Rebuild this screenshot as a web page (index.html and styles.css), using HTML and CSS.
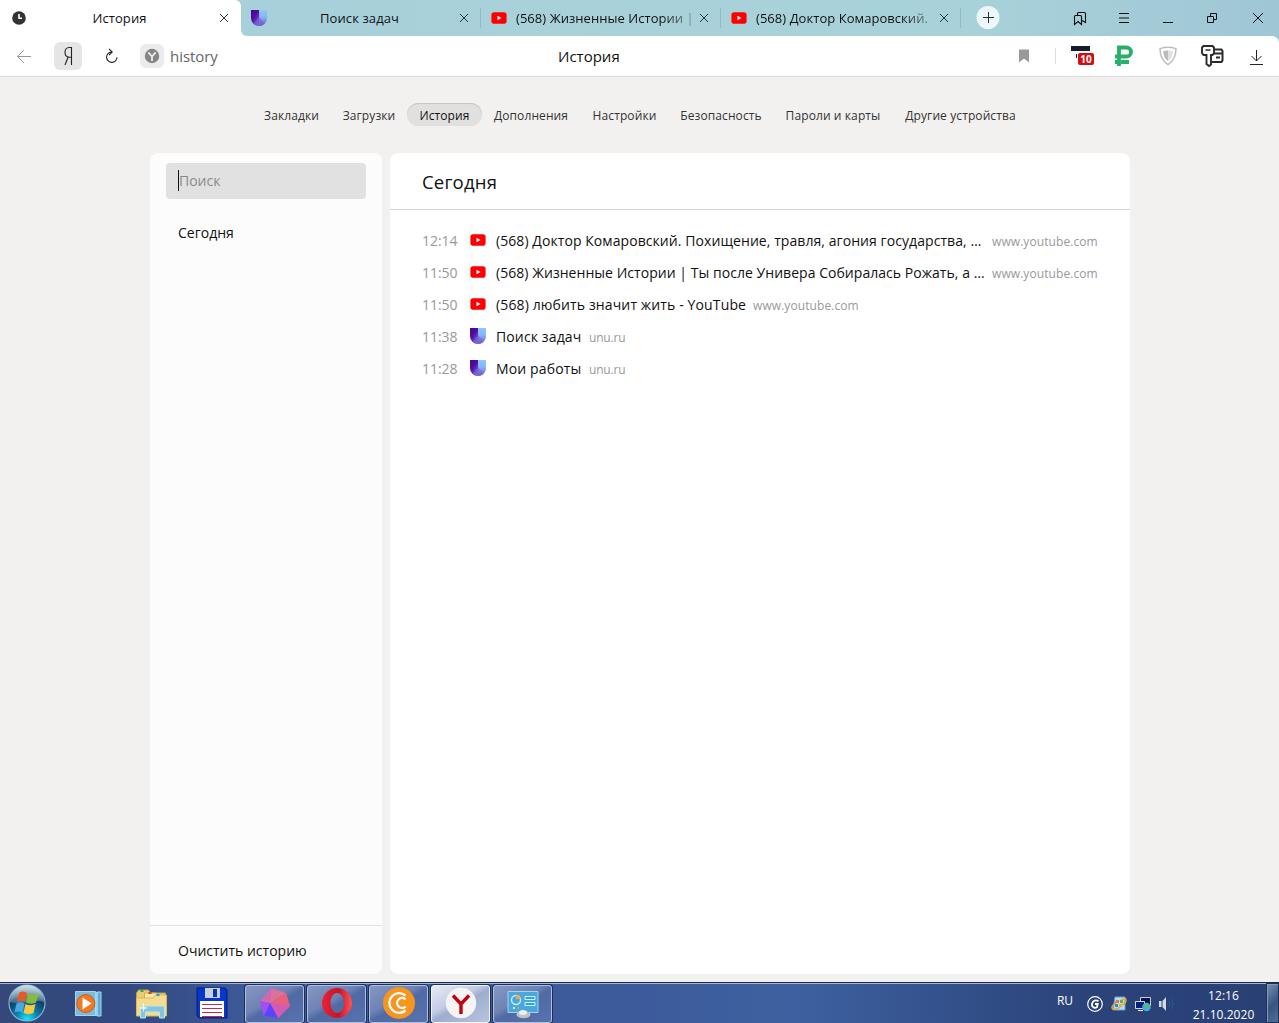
FILE: index.html
```html
<!DOCTYPE html>
<html lang="ru">
<head>
<meta charset="utf-8">
<title>История</title>
<link rel="stylesheet" href="styles.css">
</head>
<body>
<svg class="defs" width="0" height="0">
  <defs>
    <linearGradient id="unuLeft" x1="0" y1="0" x2="0.7" y2="1"><stop offset="0" stop-color="#4a0099"/><stop offset="0.5" stop-color="#52109f"/><stop offset="1" stop-color="#7d62d6"/></linearGradient>
    <linearGradient id="unuRight" x1="0" y1="0" x2="0" y2="1"><stop offset="0" stop-color="#91c7ff"/><stop offset="0.45" stop-color="#85b5f8"/><stop offset="1" stop-color="#7054cc"/></linearGradient>
  </defs>
  <symbol id="youtube" viewBox="0 0 16 16"><rect x="0.4" y="2.3" width="15.2" height="11.4" rx="2.8" fill="#f00"/><path d="M6.5 5.7v4.6l4-2.3z" fill="#fff"/></symbol>
  <symbol id="unu" viewBox="0 0 16 16"><path d="M0 0h8v16a8 8 0 0 1-8-8z" fill="url(#unuLeft)"/><path d="M8 0h8v8a8 8 0 0 1-8 8z" fill="url(#unuRight)"/><path d="M8 7 2.4 13.7A8 8 0 0 0 13.7 13.7z" fill="#7861d5" opacity=".65"/></symbol>
  <symbol id="close" viewBox="0 0 10 10"><path d="M1 1l8 8M9 1 1 9" stroke="#263238" fill="none"/></symbol>
</svg>

<header class="browser">
  <div class="tabs">
    <div class="tab tab-active">
      <svg class="tab-icon" viewBox="0 0 16 16"><circle cx="8" cy="8" r="6.8" fill="#333"/><path d="M8 4v4.3h3" stroke="#fff" stroke-width="1.6" fill="none"/></svg>
      <span class="tab-title centered">История</span>
      <svg class="close"><use href="#close"/></svg>
    </div>
    <div class="tab-strip">
      <div class="tab">
        <svg class="tab-icon"><use href="#unu"/></svg>
        <span class="tab-title centered">Поиск задач</span>
        <svg class="close"><use href="#close"/></svg>
      </div>
      <div class="tab">
        <svg class="tab-icon"><use href="#youtube"/></svg>
        <span class="tab-title faded">(568) Жизненные Истории |</span>
        <svg class="close"><use href="#close"/></svg>
      </div>
      <div class="tab">
        <svg class="tab-icon"><use href="#youtube"/></svg>
        <span class="tab-title faded">(568) Доктор Комаровский.</span>
        <svg class="close"><use href="#close"/></svg>
      </div>
      <svg class="new-tab" viewBox="0 0 24 24"><circle cx="12" cy="11.500" r="11.500" fill="#edf6f8"/><path d="M12.500 6v11M7 11.500h11" stroke="#25323b" stroke-width="1"/></svg>
      <div class="window-buttons">
        <svg viewBox="0 0 16 16"><path d="M2.500 6.500q0-1 1-1h5q1 0 1 1v8L6 11.500l-3.500 3zM5.500 5.500v-2q0-1 1-1h6q1 0 1 1v9l-3.500-2" stroke="#111" stroke-width="1.100" fill="none"/></svg>
        <svg viewBox="0 0 16 16"><path d="M3 3.500h10M3 8h10M3 12.500h10" stroke="#111" stroke-width="1.100"/></svg>
        <svg viewBox="0 0 16 16"><path d="M3 12.500h10" stroke="#111"/></svg>
        <svg viewBox="0 0 16 16"><path d="M3.500 6.500h6v6h-6zM6.500 6.500v-3h6v6h-3" stroke="#111" fill="none"/></svg>
        <svg viewBox="0 0 16 16"><path d="M3 3l10 10M13 3 3 13" stroke="#111"/></svg>
      </div>
    </div>
  </div>
  <div class="toolbar">
    <svg class="back" viewBox="0 0 16 16"><path d="M15 8.500H1.500M8 2 1.500 8.500 8 15" stroke="#999" fill="none"/></svg>
    <span class="yandex"><svg viewBox="0 0 12 20"><path d="M9.500 1v18M9.500 1.500H7.200C4.500 1.500 3 3.400 3 6.300s1.500 4.900 4.200 4.900h2.300M6 11.200 3 19" stroke="#222" stroke-width="1.100" fill="none"/></svg></span>
    <svg class="reload" viewBox="0 0 16 16"><path d="M8.500 4A5.200 5.200 0 1 0 14 9.200M6 .8 9.200 4 6 7.200" stroke="#222" stroke-width="1.100" fill="none"/></svg>
    <span class="site-badge"><svg viewBox="0 0 16 16"><circle cx="8" cy="8" r="7.200" fill="#858585"/><path d="M4.300 4.300 8 8.500l3.700-4.200M8 8v5" stroke="#eee" stroke-width="1.800" fill="none"/></svg></span>
    <span class="address">history</span>
    <span class="page-title">История</span>
    <svg class="bookmark" viewBox="0 0 12 14"><path d="M1 0.500h10v13L6 9.500l-5 4z" fill="#999"/></svg>
    <i class="divider"></i>
    <span class="counter"><svg viewBox="0 0 24 20"><path d="M1 0h19v5H1z" fill="#171b2a"/><path d="M6 8h1v4H6z" fill="#171b2a"/></svg><b>10</b></span>
    <svg class="ruble" viewBox="0 0 20 22"><path d="M5 21V2.500h7.500a4.400 4.400 0 0 1 0 9H1M1 17h4M7 17h8" stroke="#25b16c" stroke-width="3.800" fill="none"/></svg>
    <svg class="shield" viewBox="0 0 20 20"><path d="M10 1.300c3 0 5.500.5 8 1.300 0 7-2 12.400-8 16-6-3.600-8-9-8-16 2.500-.8 5-1.300 8-1.300z" stroke="#bdbdbd" stroke-width="1.500" fill="#fff"/><path d="M10 4.500c-1.700 0-3.300.3-4.800.7.3 4.500 1.500 7.500 4.800 10z" fill="#bbb"/><path d="M10 4.500c1.700 0 3.300.3 4.800.7-.3 4.500-1.500 7.500-4.800 10z" fill="#e2e2e2"/></svg>
    <svg class="keys" viewBox="0 0 24 24"><path d="M13 5.500h8.500L22.500 7v9.500L21.500 18H12M13 9.500h9M16 13.500h4" stroke="#2b2b2b" stroke-width="2" fill="none"/><path d="M3.500 2h9L14 3.500V9l-1.500 2H11v9.500l-2 1.500-2.500-2v-9H3.500L2 9V3.500z" stroke="#2b2b2b" stroke-width="1.900" fill="#fff"/><path d="M5.500 6h5" stroke="#2b2b2b" stroke-width="1.500"/></svg>
    <svg class="download" viewBox="0 0 14 16"><path d="M7.500 1v11M2.500 7l5 5 5-5M1 15.500h13" stroke="#222" stroke-width="1" fill="none"/></svg>
  </div>
</header>

<main>
  <nav>
    <a class="n1">Закладки</a><a class="n2">Загрузки</a><a class="n3 current">История</a><a class="n4">Дополнения</a><a class="n5">Настройки</a><a class="n6">Безопасность</a><a class="n7">Пароли и карты</a><a class="n8">Другие устройства</a>
  </nav>
  <div class="panels">
    <aside>
      <div class="search"><span>Поиск</span></div>
      <a class="day">Сегодня</a>
      <a class="clear">Очистить историю</a>
    </aside>
    <section>
      <h1>Сегодня</h1>
      <ul>
        <li><time>12:14</time><svg><use href="#youtube"/></svg><span class="title t1">(568) Доктор Комаровский. Похищение, травля, агония государства, …</span><span class="host">www.youtube.com</span></li>
        <li><time>11:50</time><svg><use href="#youtube"/></svg><span class="title t2">(568) Жизненные Истории | Ты после Универа Собиралась Рожать, а …</span><span class="host">www.youtube.com</span></li>
        <li><time>11:50</time><svg><use href="#youtube"/></svg><span class="title t3">(568) любить значит жить - YouTube</span><span class="host">www.youtube.com</span></li>
        <li><time>11:38</time><svg><use href="#unu"/></svg><span class="title t4">Поиск задач</span><span class="host short">unu.ru</span></li>
        <li><time>11:28</time><svg><use href="#unu"/></svg><span class="title t5">Мои работы</span><span class="host short">unu.ru</span></li>
      </ul>
    </section>
  </div>
</main>

<footer>
  <svg class="start" viewBox="0 0 38 38">
    <defs><radialGradient id="orb" cx=".5" cy=".95" r=".9"><stop offset="0" stop-color="#20e5fa"/><stop offset=".35" stop-color="#087dac"/><stop offset=".7" stop-color="#123d66"/><stop offset="1" stop-color="#7ca3b8"/></radialGradient><linearGradient id="gloss" x2="0" y2="1"><stop stop-color="#dbe8ec" stop-opacity=".85"/><stop offset="1" stop-color="#a4c2cf" stop-opacity=".3"/></linearGradient></defs>
    <circle cx="19" cy="19" r="18" fill="url(#orb)" stroke="#80b6ce" stroke-width="1.200"/><path d="M2 18a17 17 0 0 1 34 0c-12-4-22 4-34 0z" fill="url(#gloss)"/>
    <path d="M11 9c3-2 5-2 8 0l-2 9c-3-1.500-5-1.500-8 0z" fill="#e65a26"/><path d="M20 9.500c3 1.600 7 1.600 11 0l-3 9c-3 1.500-7 1.500-10 0z" fill="#83bd3b"/><path d="M8.500 19.500c3-1.600 5-1.600 8 0l-2 9c-3-1.500-5-1.500-8 0z" fill="#4ba8e4"/><path d="M17.500 20c3 1.600 6 1.600 10 0l-2 9c-3 1.500-7 1.500-10 0z" fill="#fbc83b"/>
  </svg>
  <svg class="wmp" viewBox="0 0 28 26"><path d="M22 1h4v24h-4z" fill="#5ba9d7" stroke="#a4daf3"/><path d="M20 1h3v24h-3z" fill="#96d2ef"/><path d="M.5.500h20v24H.500z" fill="#7dbbdd" stroke="#9ed9f2"/><circle cx="10.800" cy="12.500" r="9" fill="#f27822" stroke="#d55b15"/><path d="M7.500 6.500v12l9-6z" fill="#fff"/></svg>
  <svg class="explorer" viewBox="0 0 32 30"><path d="M1 4 3 1h10l2 3h15v22H1z" fill="#e8cd76" stroke="#bd9d44"/><path d="M9 4h12l1 3h8v18H9z" fill="#f7e8a1" stroke="#cbad58"/><path d="M1 9h17l2-3h11v21H1z" fill="#f4dc8c" stroke="#d6b962"/><path d="M5 1h3v2H5z" fill="#25b535"/><path d="M13 3h3v2h-3z" fill="#d54127"/><path d="M21 5h3v2h-3z" fill="#2698da"/><path d="M5 29V19q0-2 2-2h20q2 0 2 2v10h-5v-6H10v6z" fill="#83c4df" stroke="#bce5ef"/><path d="m8 13 .8 5 4 1-4 1-.8 4-.8-4-4-1 4-1z" fill="#fff" opacity=".8"/></svg>
  <svg class="floppy" viewBox="0 0 32 32"><path d="M1 1h28l2 2v28H3l-2-2z" fill="#0636d0" stroke="#071c75"/><path d="M9 1h15v10H9z" fill="#c9cfda"/><path d="M17 2h4v8h-4z" fill="#0534b6"/><path d="M4 14h24v16H4z" fill="#fff"/><path d="M6 17.500h20M6 21.500h20M6 25.500h20M6 29.500h20" stroke="#c32c47"/></svg>
  <div class="apps">
    <span><svg viewBox="0 0 32 32"><path d="M12 1 27 6l4 13-12 12-14-2-4-15z" fill="#b85be0"/><path d="m12 1 15 5-16 10z" fill="#dc7199"/><path d="m12 1-1 15-10-2z" fill="#c86bb0"/><path d="M27 6 31 19 11 16z" fill="#e76278"/><path d="M31 19 19 31l-8-15z" fill="#d45bb1"/><path d="M1 14l10 2L5 29z" fill="#a64cf4"/><path d="M5 29l6-13 8 15z" fill="#5745ff"/></svg></span>
    <span><svg viewBox="0 0 32 32"><defs><linearGradient id="opera"><stop stop-color="#f02035"/><stop offset=".55" stop-color="#c51427"/><stop offset="1" stop-color="#ff5357"/></linearGradient></defs><path fill-rule="evenodd" d="M16 1a15 15 0 1 1 0 30 15 15 0 0 1 0-30zm0 5c-4 0-6.500 4.500-6.500 10s2.500 10 6.500 10 7-4.500 7-10-3-10-7-10z" fill="url(#opera)"/></svg></span>
    <span><svg viewBox="0 0 32 32"><circle cx="16" cy="16" r="16" fill="#f7951e"/><path d="M22.500 8.500A9.800 9.800 0 1 0 22.500 23.500M22.500 12.300A5 5 0 1 0 22.500 19.700" stroke="#fff" stroke-width="2.300" fill="none"/></svg></span>
    <span class="selected"><svg viewBox="0 0 32 32"><circle cx="16" cy="16" r="15.200" fill="#f4f4f5"/><path d="M8 8.500 16 17l8-8.500M16 16v11" stroke="#c4000d" stroke-width="3.400" fill="none"/></svg></span>
    <span><svg viewBox="0 0 32 32"><path d="M1 4.500h30v21H1z" fill="#4ba6dc" stroke="#a2d5ec"/><circle cx="9" cy="13" r="4.500" fill="none" stroke="#c1ecff" stroke-width="1.500"/><path d="M9 7v5.500l5.500-1Z" fill="#f5a832"/><path d="M18 9.500h10v3H18zM18 15.500h10v3H18z" fill="#26a5e9" stroke="#d3f3ff"/><circle cx="7" cy="21" r="1" fill="#fff"/><circle cx="11" cy="21" r="1" fill="#f8a52c"/><ellipse cx="16.500" cy="27.500" rx="7" ry="3.800" fill="#bfc3c6"/><ellipse cx="16" cy="25.500" rx="4" ry="2.500" fill="#eee"/></svg></span>
  </div>
  <div class="tray">
    <span class="lang">RU</span>
    <svg viewBox="0 0 16 16"><circle cx="8" cy="8" r="7.300" fill="#254277" stroke="#fff" stroke-width="1.200"/><path d="M11.500 5.300C9 3.500 5.500 4.500 5 8c-.5 3.500 3 4.500 5 3.300L10.700 8H8" stroke="#fff" stroke-width="1.800" fill="none"/></svg>
    <svg viewBox="0 0 16 16"><path d="M4 1h10v13H2z" fill="#b4dff3" stroke="#64a1c9"/><path d="M5 4h3v3H4z" fill="#ed7831"/><path d="M9 4h3v3H9z" fill="#62ac46"/><path d="M4 8h3v3H4z" fill="#268ed0"/><path d="M8 8h3v3H8z" fill="#e8b739"/><path d="M5 7Q-1 11 2 13q4 1 8-3M10 4q5-3 5 0t-4 5" fill="none" stroke="#eda431" stroke-width="1.500"/></svg>
    <svg viewBox="0 0 16 16"><path d="M5.500 1.500h10v8h-10z" fill="#07144e" stroke="#c3ccd2"/><path d="M.5 5.500h9v7h-9z" fill="#061f7b" stroke="#d0dade"/><path d="M3 14.500h5" stroke="#eee"/><circle cx="11.500" cy="11" r="4.300" fill="#49a5e8"/><path d="m9 9 3-1 3 2-3 3-2-1z" fill="#54bd5c"/></svg>
    <svg viewBox="0 0 16 16"><path d="M0 5h2.500v6H0zM3.500 5 7 1v14l-3.500-4z" fill="#d3dadf"/><path d="M10 5q2 3 0 6M12 3q4 5 0 10" stroke="#1a668d" fill="none"/></svg>
    <div class="clock"><span>12:16</span><span>21.10.2020</span></div>
    <i class="show-desktop"></i>
  </div>
</footer>
</body>
</html>
```
FILE: styles.css
```css
* { box-sizing: border-box; }
body { margin: 0; height: 1023px; display: flex; flex-direction: column; overflow: hidden; background: #f2f1ef; color: #111; font-family: "Open Sans", "Noto Sans", sans-serif; }
svg { display: block; flex: none; }
.defs { position: absolute; }

.browser { height: 77px; background: linear-gradient(90deg, #a8d0da, #a8d2da 70%, #9fc6d5); border-bottom: 1px solid #dad9d7; }
.tabs { height: 36px; display: flex; background: linear-gradient(90deg, #fff 248px, #9fc6d5 248px); }
.tab-strip { flex: 1; display: flex; align-items: center; background: linear-gradient(90deg, #a8d0da, #a8d2da 70%, #9fc6d5); border-bottom-left-radius: 6px; }
.tab { width: 240px; height: 36px; display: flex; align-items: center; padding: 0 12px 0 11px; position: relative; font-size: 13px; letter-spacing: .1px; }
.tab-active { width: 241px; background: linear-gradient(#a8d0da, #a8d0da) right top / 6px 6px no-repeat; }
.tab-active::before { content: ""; position: absolute; inset: 0; background: #fff; border-top-right-radius: 6px; }
.tab-active > * { position: relative; }
.tab-strip .tab { padding-left: 10px; }
.tab-strip .tab::after { content: ""; width: 1px; height: 20px; background: #94b9c4; position: absolute; right: 0; top: 8px; }
.tab-icon { width: 16px; height: 16px; }
.tab-title { flex: 1; margin: 0 8px; white-space: nowrap; }
.tab-title.centered { text-align: center; margin: 0 12px 0 5px; }
.tab-title.faded { min-width: 0; margin: 0 6px 0 9px; letter-spacing: .05px; -webkit-mask-image: linear-gradient(90deg, #000 82%, rgba(0,0,0,.3)); mask-image: linear-gradient(90deg, #000 82%, rgba(0,0,0,.3)); }
.close { width: 10px; height: 10px; }
.new-tab { width: 24px; height: 24px; margin-left: 15px; }
.window-buttons { margin-left: auto; margin-right: 13px; display: flex; gap: 28px; }
.window-buttons svg { width: 16px; height: 16px; }
.window-buttons svg:last-child { margin-left: 2px; }

.toolbar { height: 40px; background: #fff; border-top-right-radius: 7px; display: flex; align-items: center; padding: 0 15px 0 16px; }
.back { width: 16px; height: 16px; }
.yandex { width: 28px; height: 28px; margin-left: 22px; border-radius: 6px; background: #e5e5e5; display: grid; place-items: center; }
.yandex svg { width: 12px; height: 20px; }
.reload { width: 16px; height: 16px; margin-left: 21px; }
.site-badge { width: 24px; height: 24px; margin-left: 21px; border-radius: 6px; background: #ebebeb; display: grid; place-items: center; }
.site-badge svg { width: 16px; height: 16px; }
.address { width: 50px; margin-left: 6px; font-size: 15px; letter-spacing: -.05px; color: #666; }
.page-title { width: 62px; margin-left: 338px; white-space: nowrap; font-size: 15px; letter-spacing: 0; }
.bookmark { width: 12px; height: 14px; margin-left: 398px; }
.divider { width: 1px; height: 16px; margin-left: 25px; background: #ddd; }
.counter { width: 24px; height: 20px; margin-left: 14px; position: relative; }
.counter svg { width: 24px; height: 20px; }
.counter b { position: absolute; left: 8px; top: 7px; width: 16px; height: 12px; border-radius: 2px; background: #d60b12; color: #fff; font-size: 10px; line-height: 12px; text-align: center; }
.ruble { width: 20px; height: 22px; margin-left: 20px; }
.shield { width: 20px; height: 20px; margin-left: 24px; }
.keys { width: 24px; height: 24px; margin-left: 22px; }
.download { width: 14px; height: 16px; margin-left: 25px; margin-top: 1px; }

main { height: 905px; display: flex; flex-direction: column; align-items: center; padding-top: 26px; }
nav { display: flex; height: 23px; font-size: 12px; line-height: 25px; color: #333; letter-spacing: .1px; margin-left: 1px; }
nav a { text-align: center; white-space: nowrap; }
nav .current { color: #111; background: #e1e0de; border-radius: 12px; box-shadow: inset 0 1px 1px #c6c5c3; }
.n1 { width: 79px; }
.n2 { width: 76px; }
.n3 { width: 75px; }
.n4 { width: 98px; }
.n5 { width: 89px; }
.n6 { width: 104px; }
.n7 { width: 120px; }
.n8 { width: 135px; }
.panels { width: 980px; height: 821px; margin-top: 27px; margin-left: 1px; display: flex; gap: 8px; }
aside { width: 232px; display: flex; flex-direction: column; background: #fcfcfc; border-radius: 8px; font-size: 14px; }
.search { height: 36px; margin: 10px 16px 0; padding-left: 12px; background: #e1e1e1; border-radius: 4px; display: flex; align-items: center; color: #8b8b8b; }
.search span { border-left: 1px solid #111; line-height: 20px; padding-top: 1px; margin-top: -1px; }
.day { margin: 23px 28px 0; line-height: 22px; letter-spacing: 0; }
.clear { height: 49px; margin-top: auto; padding: 0 28px; border-top: 1px solid #e1e1e1; line-height: 49px; letter-spacing: 0; }
section { flex: 1; background: #fff; border-radius: 8px; }
h1 { height: 57px; margin: 0; padding-left: 32px; border-bottom: 1px solid #d7d7d7; font-size: 18.500px; font-weight: 400; line-height: 58px; letter-spacing: .2px; }
ul { margin: 0; padding: 14px 32px; list-style: none; }
li { height: 32px; display: flex; align-items: center; white-space: nowrap; }
time { width: 48px; color: #999; font-size: 14px; letter-spacing: -.05px; }
li svg { width: 16px; height: 16px; margin-top: -1px; }
.title { margin-left: 10px; font-size: 14px; letter-spacing: .13px; }
.t1 { width: 489px; letter-spacing: .07px; }
.t2 { width: 489px; letter-spacing: .04px; }
.t3 { width: 250px; }
.t4, .t5 { width: 86px; }
.host { margin-left: 7px; color: #999; font-size: 12px; letter-spacing: .08px; position: relative; top: 1px; }
.short { letter-spacing: -.2px; }

footer { height: 41px; display: flex; align-items: center; padding-left: 8px; border-top: 1px solid #17284b; box-shadow: inset 0 1px #a1b6d5; background: linear-gradient(90deg, #354879, #31497f 10%, #405f9f 22%, #3d5a9b 48%, #3d61a0 62%, #2b4379 85%, #294075); color: #fff; }
.start { width: 38px; height: 38px; }
.wmp { width: 28px; height: 26px; margin-left: 29px; margin-top: 2px; }
.explorer { width: 33px; height: 30px; margin-left: 32px; margin-top: 2px; }
.floppy { width: 32px; height: 32px; margin-left: 28px; }
.apps { display: flex; gap: 3px; margin-left: 17px; height: 38px; margin-top: 1px; }
.apps span { width: 59px; height: 38px; display: grid; place-items: center; border: 1px solid #aebfdf; border-radius: 3px; background: linear-gradient(150deg, #8596c1, #6e83b6 40%, #506aa4 52%, #5872af); box-shadow: 0 0 0 1px #1c2e58; }
.apps .selected { border-color: #f2f5fb; background: linear-gradient(150deg, #e7ebf4, #c2cce3 40%, #9eadcf 52%, #b8c4df); }
.apps svg { width: 32px; height: 32px; margin-top: -2px; }
.tray { flex: 1; height: 40px; display: flex; align-items: center; justify-content: flex-end; gap: 8px; }
.tray > svg { width: 16px; height: 16px; margin-top: 2px; }
.lang { width: 22px; font-size: 12px; margin-top: -5px; letter-spacing: -.1px; }
.clock { width: 65px; margin-left: 8px; display: flex; flex-direction: column; text-align: center; font-size: 12px; line-height: 19px; letter-spacing: .05px; padding-top: 4px; font-weight: 500; }
.show-desktop { width: 13px; height: 40px; margin-left: 2px; background: linear-gradient(135deg, #7790b2, #38547f 55%, #526e98); border: 1px solid #1d3054; box-shadow: inset 1px 1px #8498b7; }
```
